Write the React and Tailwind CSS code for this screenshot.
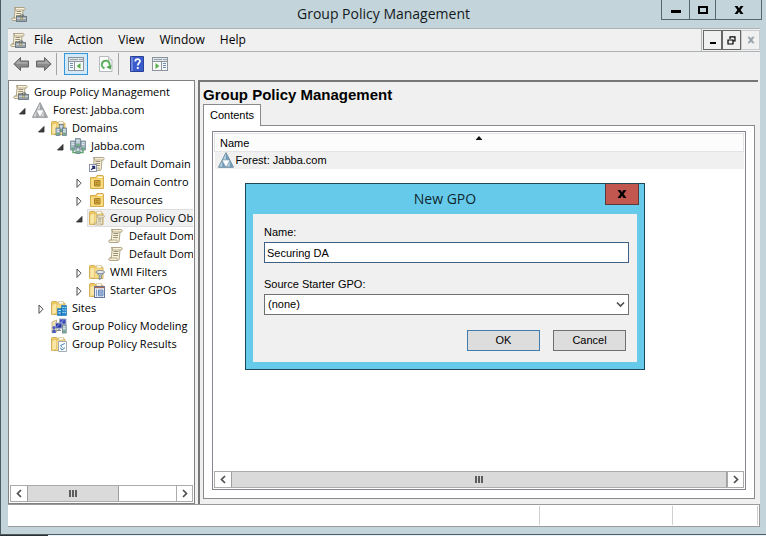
import React from 'react';

const UI = "font-['Open_Sans','Noto_Sans',sans-serif]";
const CLASSIC = "font-['Liberation_Sans',Arial,sans-serif]";

function Icon({ children, size = 16 }) {
  return (
    <svg width={size} height={size} viewBox="0 0 16 16" className="shrink-0" aria-hidden="true">
      {children}
    </svg>
  );
}

function ScrollShape() {
  return (
    <>
      <path d="M3.5 1.5h9.4c1.6 0 1.8 2.3.3 2.5h-1.2l-.8 9c-.1 1-.7 1.500-1.600 1.500H1.900c-1.600 0-1.600-2.400 0-2.500h1.400l.8-8.200z" fill="#f8f1da" stroke="#a79b7c" strokeWidth=".9" />
      <path d="M3.5 1.5c1.1.3 1.3 1.7.5 2.5h8M2 12h7.2c-.4 1 0 2 .6 2.4" fill="none" stroke="#a79b7c" strokeWidth=".8" />
      <path d="M5.5 5.5h4.8M5.3 7.5h4.8M5.1 9.5h4.8" stroke="#9a9078" strokeWidth="1" />
    </>
  );
}

function FolderShape() {
  return (
    <>
      <path d="M.5 2.5c0-.6.4-1 1-1h4L7 3h6c.6 0 1 .3 1 .9v10.600H.5z" fill="#efcb62" stroke="#c99f3e" strokeWidth=".8" />
      <path d="M7.5 1.5h5V4h-5z" fill="#fffdf2" stroke="#cbb57a" strokeWidth=".6" />
      <path d="M1 4.5h12.6V14H1z" fill="#f7da86" />
      <path d="M1 4.5 5.5 3.3v9.9L1 14.5z" fill="#fbe8a6" stroke="#dcbc66" strokeWidth=".6" />
    </>
  );
}

function ServerShape({ x, y, w = 4, h = 8 }) {
  return (
    <g>
      <rect x={x} y={y} width={w} height={h} fill="#a5b9c3" stroke="#5a7180" strokeWidth=".7" />
      <path d={`M${x + 0.7} ${y + 1.7}h${w - 1.4}M${x + 0.7} ${y + 3.4}h${w - 1.4}`} stroke="#f1f6f8" strokeWidth=".8" />
      <path d={`M${x + 0.7} ${y + h - 1.6}h${w - 1.4}`} stroke="#58a766" strokeWidth="1.4" />
    </g>
  );
}

function ConsoleIcon() {
  return (
    <Icon>
      <ScrollShape />
      <path d="M9.5 10.5V9h3.2v1.5" fill="none" stroke="#5c666e" strokeWidth="1" />
      <rect x="5.5" y="10.5" width="10" height="5" fill="#98a2aa" stroke="#606c75" strokeWidth=".8" />
      <path d="M6 12.3h9" stroke="#dfe5e9" strokeWidth=".8" />
      <rect x="9.8" y="11.6" width="2" height="2" fill="#dfcd83" stroke="#6b6650" strokeWidth=".4" />
    </Icon>
  );
}

function ForestIcon({ blue }) {
  const light = blue ? '#b5d0e0' : '#d4d6d7';
  const dark = blue ? '#7199b4' : '#a2a5a7';
  const line = blue ? '#587f99' : '#808386';
  return (
    <Icon>
      <path d="M8 .7 15.5 15.3H.5z" fill="#fcfdfe" stroke={line} strokeWidth=".8" />
      <path d="M8 .9 11.5 7.9H4.5zM4.2 8.4 7.7 15H.9zM11.8 8.4 15.1 15H8.3z" fill={light} stroke={line} strokeWidth=".5" />
      <path d="M8 1.3 11.3 7.7H8zM4.3 8.8 7.4 14.9H4.3zM11.8 8.8 14.9 14.9H11.8z" fill={dark} />
    </Icon>
  );
}

function DomainsIcon() {
  return (
    <Icon>
      <FolderShape />
      <ServerShape x={8.2} y={4.5} w={4} h={7} />
      <ServerShape x={5} y={8} w={4} h={7.5} />
      <ServerShape x={11.5} y={8} w={4} h={7.5} />
    </Icon>
  );
}

function DomainIcon() {
  return (
    <Icon>
      <path d="M3 11v3.5h10V11" fill="none" stroke="#5aa868" strokeWidth="1.4" />
      <ServerShape x={0.7} y={3} w={4.3} h={9} />
      <ServerShape x={11} y={3} w={4.3} h={9} />
      <ServerShape x={5.6} y={0.7} w={4.8} h={8} />
      <ServerShape x={6} y={9.5} w={4} h={6} />
    </Icon>
  );
}

function ScrollIcon() {
  return <Icon><ScrollShape /></Icon>;
}

function LinkedScrollIcon() {
  return (
    <Icon>
      <g transform="translate(1 0)"><ScrollShape /></g>
      <rect x=".5" y="8.5" width="7" height="7" fill="#fff" stroke="#7f88a4" strokeWidth=".9" />
      <path d="M2.2 13.9 5 11M3 10.5h2.6v2.6" fill="none" stroke="#22306f" strokeWidth="1.3" />
    </Icon>
  );
}

function OuIcon() {
  return (
    <Icon>
      <path d="M1.5 3.5h5l1.5-2h5.5c.6 0 1 .4 1 1v12h-13z" fill="#f0c95a" stroke="#c99d3a" strokeWidth=".8" />
      <path d="M8.5 2.5h5V4h-5z" fill="#fffbe6" />
      <path d="M2 5h12v9H2z" fill="#fadb7e" />
      <path d="M5.5 6.5H11V12H5.5z" fill="#e3b13c" stroke="#9b7622" strokeWidth=".9" />
      <path d="M6.5 8.2h3.2M6.5 10.2h3.2" stroke="#7d5f1c" strokeWidth=".8" />
    </Icon>
  );
}

function PolicyFolderIcon() {
  return (
    <Icon>
      <FolderShape />
      <g transform="translate(5 4.2) scale(.74)"><ScrollShape /></g>
    </Icon>
  );
}

function WmiIcon() {
  return (
    <Icon>
      <FolderShape />
      <path d="M6.800 8h8.800l-3.200 3.700v3l-2.200.9v-4z" fill="#b3bdc4" stroke="#6c7881" strokeWidth=".7" />
      <ellipse cx="11.2" cy="8" rx="4.3" ry="1.5" fill="#eef2f5" stroke="#6c7881" strokeWidth=".8" />
    </Icon>
  );
}

function StarterIcon() {
  return (
    <Icon>
      <FolderShape />
      <rect x="5.5" y="4.5" width="10" height="11" fill="#f2f6fb" stroke="#66799a" strokeWidth="1" />
      <path d="M5.5 5.5h10" stroke="#a3675d" strokeWidth="1.4" />
      <path d="M7.5 7.5v7" stroke="#7c9bc9" strokeWidth="1.2" />
      <path d="M9.5 8H14v5.8H9.5z" fill="#b9cfea" stroke="#4e74ad" strokeWidth=".8" />
      <path d="M10.2 10h3M10.2 12h3" stroke="#4e74ad" strokeWidth=".8" />
    </Icon>
  );
}

function SitesIcon() {
  return (
    <Icon>
      <FolderShape />
      <path d="M10.5 5.5h5v10h-5zM6.5 8.5h4v7h-4z" fill="#2387cb" stroke="#1c6ea8" strokeWidth=".6" />
      <path d="M11.5 7.5h1.2M13.6 7.5h1.2M11.5 10h1.2M13.6 10h1.2M11.5 12.5h1.2M13.6 12.5h1.2M7.5 10.5h2.2M7.5 13h2.2" stroke="#d4eeff" strokeWidth="1.2" />
    </Icon>
  );
}

function ModelingIcon() {
  return (
    <Icon>
      <path d="M1 4 5.5 2v12L1 15z" fill="#efe3b4" stroke="#b09a5e" strokeWidth=".7" />
      <rect x="8.5" y="1" width="6.5" height="5.2" fill="#3a48ba" stroke="#a7afbd" strokeWidth="1" />
      <rect x="4.5" y="5" width="6.5" height="5.2" fill="#2c37a6" stroke="#b0b8c6" strokeWidth="1" />
      <path d="M5.6 9 8.4 6M9.8 5l2.4-3" stroke="#98a8f2" strokeWidth=".9" />
      <path d="M6 12.3h4M8 10.5v2" stroke="#7a8492" strokeWidth="1.2" />
      <ServerShape x={11.4} y={7} w={3.8} h={8} />
      <circle cx="3" cy="9.5" r="1.6" fill="#4a5ac4" />
      <path d="M1.3 15v-2c0-1 .7-1.7 1.7-1.7s1.800.7 1.800 1.700v2z" fill="#4a5ac4" />
    </Icon>
  );
}

function ResultsIcon() {
  return (
    <Icon>
      <FolderShape />
      <path d="M7.5 5.5h8v10h-8z" fill="#fbfdff" stroke="#9aa5b1" strokeWidth=".9" />
      <path d="M13.8 7.5 9.5 9.5l2 2.2M9.3 11.7l1.5 2.3 3.2-2.3" fill="none" stroke="#4a83ba" strokeWidth="1" />
    </Icon>
  );
}

function ArrowIcon({ flip }) {
  return (
    <Icon>
      <g transform={flip ? 'translate(16 0) scale(-1 1)' : undefined}>
        <path d="M.8 8 7.5 1.5V5h8v6h-8v3.5z" fill="#8a8a8a" stroke="#646464" strokeWidth="1" />
        <path d="M2.2 7.8 6.7 3.4V6h8v1.8z" fill="#aaaaaa" />
      </g>
    </Icon>
  );
}

function PaneIcon({ right }) {
  return (
    <Icon>
      <rect x=".5" y="1.5" width="15" height="13" fill="#f7f8f8" stroke="#8b949c" />
      <path d="M1 2h14v3H1z" fill="#dfe4e8" />
      <path d="M2 3.5h8" stroke="#9aa3ab" />
      <path d="M11.5 3.5h1M13.5 3.5h1" stroke="#5f6b76" />
      <path d="M.5 5.5h15" stroke="#8b949c" />
      <g transform={right ? 'translate(16 0) scale(-1 1)' : undefined}>
        <path d="M6.5 5.5v9" stroke="#8b949c" />
        <path d="M2 7.5h3M2 9.5h3M2 11.5h3" stroke="#6c8fb3" />
        <path d="M12.5 7v6L8.7 10z" fill="#58ad48" />
      </g>
    </Icon>
  );
}

function RefreshIcon() {
  return (
    <Icon>
      <path d="M1.5.5h9L14 4v11.500H1.500z" fill="#fbfbfb" stroke="#b5babd" />
      <path d="M10.5.5V4H14" fill="#e9ecee" stroke="#b5babd" />
      <path d="M6.5 12.3A3.9 3.9 0 1 1 11.5 9.5" fill="none" stroke="#5bb05c" strokeWidth="2" />
      <path d="M13.6 8.8 12.6 13.6 8.2 11z" fill="#4aa04c" />
    </Icon>
  );
}

function HelpIcon() {
  return (
    <Icon>
      <path d="M1.5.5h13v15h-13z" fill="#3a5bcb" stroke="#2b4299" />
      <path d="M2 1h2v14H2z" fill="#7089de" />
      <path d="M6.2 5.4c0-3 4.8-3 4.8-.3 0 1.9-2.3 2-2.3 4.3" fill="none" stroke="#fff" strokeWidth="1.7" />
      <rect x="7.8" y="11" width="1.9" height="1.9" fill="#fff" />
    </Icon>
  );
}

function Chevron({ dir }) {
  const d = { left: 'M6 1 2.5 4.5 6 8', right: 'M3 1l3.5 3.5L3 8', down: 'M1 2.5 4.5 6 8 2.5' }[dir];
  return (
    <svg width="9" height="9" viewBox="0 0 9 9" aria-hidden="true">
      <path d={d} fill="none" stroke="#4f4f4f" strokeWidth="1.7" />
    </svg>
  );
}

function CloseGlyph({ color = '#000', size = 10 }) {
  return (
    <svg width={size} height={size} viewBox="0 0 10 10" aria-hidden="true">
      <path d="M.5 1h3L5 3.2 6.5 1h3L6.6 5l2.9 4h-3L5 6.8 3.5 9h-3l2.9-4z" fill={color} />
    </svg>
  );
}

const TREE = [
  {
    label: 'Forest: Jabba.com', icon: <ForestIcon />, open: true,
    children: [
      {
        label: 'Domains', icon: <DomainsIcon />, open: true,
        children: [
          {
            label: 'Jabba.com', icon: <DomainIcon />, open: true,
            children: [
              { label: 'Default Domain', icon: <LinkedScrollIcon /> },
              { label: 'Domain Contro', icon: <OuIcon />, open: false },
              { label: 'Resources', icon: <OuIcon />, open: false },
              {
                label: 'Group Policy Ob', icon: <PolicyFolderIcon />, open: true, selected: true,
                children: [
                  { label: 'Default Dom', icon: <ScrollIcon /> },
                  { label: 'Default Dom', icon: <ScrollIcon /> },
                ],
              },
              { label: 'WMI Filters', icon: <WmiIcon />, open: false },
              { label: 'Starter GPOs', icon: <StarterIcon />, open: false },
            ],
          },
        ],
      },
      { label: 'Sites', icon: <SitesIcon />, open: false },
      { label: 'Group Policy Modeling', icon: <ModelingIcon /> },
      { label: 'Group Policy Results', icon: <ResultsIcon /> },
    ],
  },
];

function TreeNode({ node }) {
  return (
    <li>
      <div className="flex h-[18px]">
        <span className="flex w-[17px] shrink-0 items-center pt-0.5 pl-1.5">
          {node.open !== undefined && (
            <svg width="8" height="10" viewBox="0 0 8 10" aria-hidden="true">
              {node.open
                ? <path d="M6 2.5V8H.5z" fill="#404040" stroke="#262626" strokeWidth=".8" />
                : <path d="M1 1l4 4.2L1 9.4z" fill="#fff" stroke="#4a4a4a" />}
            </svg>
          )}
        </span>
        <span className={node.selected
          ? 'flex grow items-center gap-[5px] border border-r-0 border-[#dedede] bg-[#f0f0f0] pl-px'
          : 'flex grow items-center gap-[5px] pl-0.5'}>
          {node.icon}
          <span className="whitespace-nowrap">{node.label}</span>
        </span>
      </div>
      {node.children && (
        <ul className="pl-[19px]">
          {node.children.map((child, i) => <TreeNode key={i} node={child} />)}
        </ul>
      )}
    </li>
  );
}

function ScrollBar({ thumb }) {
  return (
    <div className="flex h-[17px] shrink-0 border border-[#ababab] bg-white">
      <button aria-label="Scroll left" className="flex w-4 shrink-0 items-center justify-center"><Chevron dir="left" /></button>
      <div className="flex grow">
        <div className={`flex items-center justify-center gap-px border-x border-[#9f9f9f] bg-[#dadada] ${thumb}`}>
          <span className="h-[7px] w-0.5 bg-[#5c5c5c]" />
          <span className="h-[7px] w-0.5 bg-[#5c5c5c]" />
          <span className="h-[7px] w-0.5 bg-[#5c5c5c]" />
        </div>
      </div>
      <button aria-label="Scroll right" className="flex w-4 shrink-0 items-center justify-center border-l border-[#ababab]"><Chevron dir="right" /></button>
    </div>
  );
}

function TitleBar() {
  const btn = 'flex h-5 items-center justify-center border-r border-b border-[#55666f]';
  return (
    <header className="grid h-7 shrink-0 grid-cols-[1fr_auto_1fr]">
      <div className="pt-1.5 pl-2.5"><ConsoleIcon /></div>
      <h1 className="text-[14px] leading-7 text-[#14191c]">Group Policy Management</h1>
      <div className="flex items-start justify-end pr-1">
        <button aria-label="Minimize" className={`${btn} w-[29px] border-l`}><span className="mt-1 h-[3px] w-2.5 bg-black" /></button>
        <button aria-label="Maximize" className={`${btn} w-[26px]`}><span className="h-2 w-2.5 border-2 border-black" /></button>
        <button aria-label="Close" className={`${btn} w-[46px]`}><CloseGlyph /></button>
      </div>
    </header>
  );
}

function MenuBar() {
  const mdi = 'flex w-[19px] items-center justify-center border';
  return (
    <nav className="flex h-6 shrink-0 items-center border-y border-[#adb3b5] pl-0.5">
      <ConsoleIcon />
      <div className="flex grow gap-[15px] pl-2">
        <button>File</button>
        <button>Action</button>
        <button>View</button>
        <button>Window</button>
        <button>Help</button>
      </div>
      <div className="flex h-full border-l border-[#adb3b5] py-px pl-px">
        <button aria-label="Minimize child" className={`${mdi} border-[#666]`}><span className="mt-1.5 h-0.5 w-1.5 bg-black" /></button>
        <button aria-label="Restore child" className={`${mdi} border-[#666]`}>
          <svg width="9" height="9" viewBox="0 0 9 9" aria-hidden="true">
            <path d="M3 3V1h5v4H6M2.5.8H8.5M1 4h5v4H1z" fill="none" stroke="#000" strokeWidth="1.2" />
          </svg>
        </button>
        <button aria-label="Close child" className={`${mdi} border-[#c8ccce]`}><CloseGlyph color="#98a2a8" size={8} /></button>
      </div>
    </nav>
  );
}

function ToolBar() {
  return (
    <div className="flex h-7 shrink-0 items-center pb-1 pl-[5px]">
      <button aria-label="Back"><ArrowIcon /></button>
      <button aria-label="Forward" className="ml-[7px]"><ArrowIcon flip /></button>
      <span className="ml-1 h-[22px] w-px bg-[#a5a5a5]" />
      <button aria-label="Show console tree" className="ml-[7px] flex h-[22px] w-6 items-center justify-center border border-[#3399dd] bg-[#d3e9f7]"><PaneIcon /></button>
      <button aria-label="Refresh" className="ml-2.5"><RefreshIcon /></button>
      <span className="ml-1 h-[22px] w-px bg-[#a5a5a5]" />
      <button aria-label="Help" className="ml-2.5"><HelpIcon /></button>
      <button aria-label="Show action pane" className="ml-[7px]"><PaneIcon right /></button>
    </div>
  );
}

function TreePane() {
  return (
    <aside className="flex w-[187px] shrink-0 flex-col overflow-hidden border border-[#828282] bg-white px-px pt-0.5 pb-px text-[11px]">
      <div className="grow overflow-hidden pl-[3px]">
        <div className="flex h-[18px] items-center gap-[5px]">
          <ConsoleIcon />
          <span className="whitespace-nowrap">Group Policy Management</span>
        </div>
        <ul>
          {TREE.map((node, i) => <TreeNode key={i} node={node} />)}
        </ul>
      </div>
      <ScrollBar thumb="w-[92px]" />
    </aside>
  );
}

function ContentPane() {
  return (
    <main className={`flex min-w-0 grow flex-col border-t-2 border-l-2 border-[#777] pt-1 pr-[3px] pb-[5px] pl-[3px] text-[11px] ${CLASSIC}`}>
      <h2 className="h-[18px] text-[15px] leading-[18px] font-bold">Group Policy Management</h2>
      <div role="tablist" className="z-10 -mb-px flex">
        <button role="tab" aria-selected="true" className="h-[22px] w-[58px] border border-b-0 border-[#8a8a8a] bg-white">Contents</button>
      </div>
      <div className="flex grow flex-col border border-[#8a8a8a] bg-white px-2 pt-[5px] pb-2">
        <div className="flex grow flex-col border border-[#828790] p-px">
          <table className="w-full">
            <thead>
              <tr className="h-[17px] border border-[#e3e3e8] bg-[#fcfcfd]">
                <th className="relative p-0 pt-px pl-[5px] text-left leading-4 font-normal">
                  Name
                  <svg width="7" height="4" viewBox="0 0 7 4" className="absolute top-0.5 left-1/2 -translate-x-1/2" aria-hidden="true"><path d="M0 4 3.5 0 7 4z" fill="#111" /></svg>
                </th>
              </tr>
            </thead>
            <tbody>
              <tr className="h-[17px] bg-[#f0f0f0]">
                <td className="p-0 pl-[3px]">
                  <span className="flex items-center gap-0.5"><ForestIcon blue />Forest: Jabba.com</span>
                </td>
              </tr>
            </tbody>
          </table>
          <div className="grow" />
          <ScrollBar thumb="w-full" />
        </div>
      </div>
    </main>
  );
}

function NewGpoDialog() {
  const btn = 'h-[21px] w-[73px] border bg-[#dddddd]';
  return (
    <div role="dialog" aria-labelledby="dlg-title" className="absolute top-[183px] left-[245px] z-20 flex w-[400px] flex-col border border-[#1d4657] bg-[#66cbea] px-[7px] pb-[7px]">
      <div className="grid h-[30px] grid-cols-[1fr_auto_1fr]">
        <h2 id="dlg-title" className="col-start-2 text-[14px] leading-[30px] text-[#10272f]">New GPO</h2>
        <button aria-label="Close dialog" className="-mr-0.5 flex h-[21px] w-[34px] items-center justify-center justify-self-end border border-t-0 border-[#5c3a3c] bg-[#c2574f]"><CloseGlyph /></button>
      </div>
      <form className={`flex flex-col bg-[#f0f0f0] pt-[11px] pr-2 pb-[11px] pl-[11px] text-[11px] ${CLASSIC}`} onSubmit={(e) => e.preventDefault()}>
        <label htmlFor="gpo-name" className="h-[17px] leading-[15px]">Name:</label>
        <input id="gpo-name" type="text" defaultValue="Securing DA" className="h-[21px] border border-[#3d6185] bg-white px-0.5 outline-none" />
        <label htmlFor="gpo-source" className="mt-3.5 h-[17px] leading-[15px]">Source Starter GPO:</label>
        <div className="relative flex">
          <select id="gpo-source" className="h-[21px] grow appearance-none border border-[#707070] bg-white px-[3px]">
            <option>(none)</option>
          </select>
          <span className="pointer-events-none absolute top-1.5 right-1"><Chevron dir="down" /></span>
        </div>
        <div className="mt-[15px] flex justify-end gap-[13px] pr-[3px]">
          <button type="submit" className={`${btn} border-[#3f7cb0]`}>OK</button>
          <button type="button" className={`${btn} border-[#707070]`}>Cancel</button>
        </div>
      </form>
    </div>
  );
}

export default function App() {
  return (
    <div className={`relative flex h-screen flex-col overflow-hidden bg-[#e9f7fb] pb-px text-[12px] text-black ${UI}`}>
      <div className="flex min-h-0 grow flex-col border-b border-l border-[#4d5b62] bg-[#c3d5db] pb-[7px]">
        <TitleBar />
        <div className="mr-1.5 ml-[7px] flex min-h-0 grow flex-col bg-[#f0f0f0]">
          <MenuBar />
          <ToolBar />
          <div className="flex min-h-0 grow gap-[3px] pr-0.5">
            <TreePane />
            <ContentPane />
          </div>
          <footer className="flex h-[23px] shrink-0 border border-l-0 border-[#9a9a9a] bg-white py-px">
            <span className="grow border-r border-[#cfcfcf]" />
            <span className="w-[133px] border-r border-[#cfcfcf]" />
            <span className="w-[85px] border-r border-[#cfcfcf]" />
            <span className="w-px" />
          </footer>
        </div>
      </div>
      <NewGpoDialog />
      <div className="absolute bottom-0 left-0 h-px w-12 bg-[#2b2f33]" />
    </div>
  );
}
